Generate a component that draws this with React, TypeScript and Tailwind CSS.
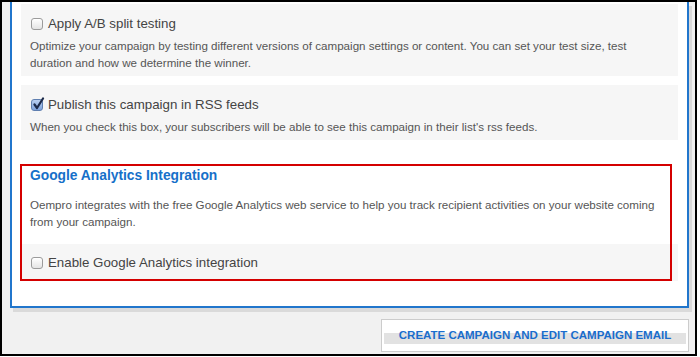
import React from 'react';

const font = { fontFamily: '"Liberation Sans", Arial, Helvetica, sans-serif' };

const CheckBox = ({ checked }: { checked?: boolean }) => {
  if (checked) {
    return (
      <span className="relative inline-block w-[12px] h-[12px] shrink-0 rounded-[3px] border border-[#5f7fb0] bg-[linear-gradient(to_bottom,#b9cff0,#7ea3dc)]">
        <svg className="absolute -top-[3px] left-[0px]" width="13" height="14" viewBox="0 0 13 14">
          <path d="M2.5 7.5 L5 11 L11 1.5" fill="none" stroke="#1c2a4a" strokeWidth="2.2" strokeLinecap="round" strokeLinejoin="round" />
        </svg>
      </span>
    );
  }
  return (
    <span className="inline-block w-[12px] h-[12px] shrink-0 rounded-[3px] border border-[#9b9b9b] bg-[linear-gradient(to_bottom,#ffffff,#e4e4e4)] shadow-[inset_0_1px_0_#fff]" />
  );
};

const OptionBox = ({
  label,
  checked,
  children,
}: {
  label: string;
  checked?: boolean;
  children: React.ReactNode;
}) => {
  return (
    <div className="bg-[#f6f6f6] pl-[9px] pr-[12px] pt-[11px] pb-[5px]">
      <label className="flex items-center gap-[5px] h-[18px] text-[13.3px] text-[#444]">
        <span className="ml-[1px] flex">
          <CheckBox checked={checked} />
        </span>
        {label}
      </label>
      <p className="mt-[4px] text-[11.6px] leading-[17px] text-[#555]">{children}</p>
    </div>
  );
};

export default function App() {
  return (
    <div className="w-[700px] h-[357px] bg-white overflow-hidden" style={font}>
      <div className="w-[697px] h-[356px] border-2 border-black bg-[#f1f1f1] flex flex-col">
        {/* main panel, top is cut off by the screenshot */}
        <div className="ml-[8px] w-[679px] bg-white border-2 border-t-0 border-[#2176cc] shadow-[3px_4px_0_#dadada] pt-[2px] pl-[9px] pr-[9px] pb-[25px]">
          <OptionBox label="Apply A/B split testing">
            Optimize your campaign by testing different versions of campaign settings or content. You can set your test size, test duration and how we determine the winner.
          </OptionBox>
          <div className="h-[9px]" />
          <OptionBox label="Publish this campaign in RSS feeds" checked>
            When you check this box, your subscribers will be able to see this campaign in their list's rss feeds.
          </OptionBox>

          <div className="relative mt-[24px]">
            <div className="pl-[9px] pr-[12px] pt-[2px]">
              <h3 className="text-[13.8px] leading-[19px] font-bold text-[#1670c9]">Google Analytics Integration</h3>
              <p className="mt-[11px] text-[11.6px] leading-[17px] text-[#555]">
                Oempro integrates with the free Google Analytics web service to help you track recipient activities on your website coming from your campaign.
              </p>
            </div>
            <div className="mt-[14px] bg-[#f6f6f6] pl-[9px] pt-[10px] pb-[9px]">
              <label className="flex items-center gap-[5px] h-[18px] text-[13.3px] text-[#444]">
                <span className="ml-[1px] flex">
                  <CheckBox />
                </span>
                Enable Google Analytics integration
              </label>
            </div>
            {/* red annotation frame */}
            <div className="absolute -left-[1px] top-0 right-[6px] bottom-0 border-2 border-[#d40000] pointer-events-none" />
          </div>
        </div>

        <button className="self-end mt-[11px] mr-[6px] w-[308px] h-[33px] border border-[#cccccc] bg-white p-[2px]">
          <div className="h-full w-full flex items-center justify-center bg-[linear-gradient(to_bottom,#fff_0,#fff_11px,#e2e2e2_11px,#e2e2e2_22px,#fff_22px)]">
            <span className="text-[11.5px] font-bold text-[#1a6dcc]">CREATE CAMPAIGN AND EDIT CAMPAIGN EMAIL</span>
          </div>
        </button>
      </div>
    </div>
  );
}
